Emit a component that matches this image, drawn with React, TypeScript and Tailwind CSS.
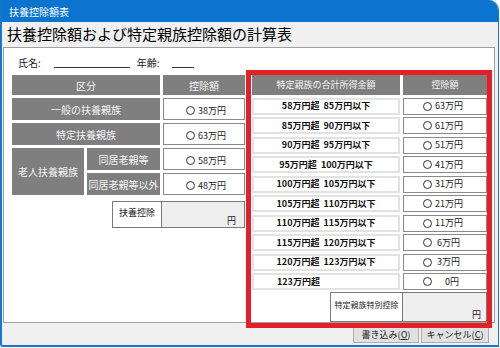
import React from "react";

const font = { fontFamily: '"Noto Sans CJK JP", "Noto Sans", sans-serif' };

function Circle() {
  return <span className="inline-block w-[9px] h-[9px] rounded-full border border-[#333] mr-[3px] shrink-0" />;
}

function Val({ v, className = "" }: { v: string; className?: string }) {
  return (
    <div className={"bg-white border border-[#8a8a8a] flex items-center text-[9px] text-[#222] " + className}>
      <Circle />
      <span>{v}</span>
    </div>
  );
}

const rightRows = [
  ["58万円超  85万円以下", "63万円"],
  ["85万円超  90万円以下", "61万円"],
  ["90万円超  95万円以下", "51万円"],
  ["95万円超  100万円以下", "41万円"],
  ["100万円超  105万円以下", "31万円"],
  ["105万円超  110万円以下", "21万円"],
  ["110万円超  115万円以下", "11万円"],
  ["115万円超  120万円以下", " 6万円"],
  ["120万円超  123万円以下", " 3万円"],
];

export default function App() {
  return (
    <div className="w-[500px] h-[348px] bg-white relative overflow-hidden" style={font}>
      <div className="w-[499px] h-[347px] flex flex-col bg-[#f0f0f0] border-l-2 border-b-2 border-r border-[#1877cc] rounded-tr-[10px] rounded-bl-[3px] overflow-hidden">
        <div className="h-[22px] bg-[#0b74cf] text-white text-[10px] pl-[7px] flex items-center shrink-0">扶養控除額表</div>
        <div className="h-[25px] flex items-center pl-[5px] text-[15px] text-black shrink-0">扶養控除額および特定親族控除額の計算表</div>
        <div className="h-[276px] mr-[3px] ml-[1px] bg-white border border-[#a0a0a0] shrink-0 pl-[8px] flex flex-col">
          <div className="h-[27px] flex items-center text-[10px] text-[#222] pt-[2px]">
            <span className="ml-[6px]">氏名:</span>
            <span className="ml-[13px] w-[76px] border-b border-[#333] mt-[10px]" />
            <span className="ml-[7px]">年齢:</span>
            <span className="ml-[12px] w-[22px] border-b border-[#333] mt-[10px]" />
          </div>
          <div className="flex gap-[7px]">
            <div className="w-[233px] flex flex-col">
              <div className="grid grid-cols-[72px_73px_82px] gap-[3px] text-[10px]">
                <div className="col-span-2 h-[20px] bg-[#7f7f7f] text-[#f4f4f4] flex items-center justify-center">区分</div>
                <div className="h-[20px] bg-[#7f7f7f] text-[#f4f4f4] flex items-center justify-center">控除額</div>
                <div className="col-span-2 h-[22px] bg-[#7f7f7f] text-[#f4f4f4] flex items-center justify-center">一般の扶養親族</div>
                <Val v="38万円" className="h-[22px] pl-[22px] pt-[3px]" />
                <div className="col-span-2 h-[22px] bg-[#7f7f7f] text-[#f4f4f4] flex items-center justify-center">特定扶養親族</div>
                <Val v="63万円" className="h-[22px] pl-[22px] pt-[3px]" />
                <div className="row-span-2 bg-[#7f7f7f] text-[#f4f4f4] flex items-center justify-center">老人扶養親族</div>
                <div className="h-[22px] bg-[#7f7f7f] text-[#f4f4f4] flex items-center justify-center">同居老親等</div>
                <Val v="58万円" className="h-[22px] pl-[22px] pt-[3px]" />
                <div className="h-[22px] bg-[#7f7f7f] text-[#f4f4f4] flex items-center justify-center">同居老親等以外</div>
                <Val v="48万円" className="h-[22px] pl-[22px] pt-[3px]" />
              </div>
              <div className="flex justify-end mt-[6px]">
                <div className="w-[50px] h-[27px] border border-[#7a7a7a] flex justify-center pt-[4px] text-[9px] text-[#222] bg-white">扶養控除</div>
                <div className="w-[83px] h-[27px] border border-l-0 border-[#7a7a7a] bg-[#efefef] flex items-end justify-end pr-[8px] text-[9px] text-[#222] leading-[12px]">円</div>
              </div>
            </div>
            <div className="w-[236px] flex flex-col">
              <div className="grid grid-cols-[148px_84px] gap-x-[3px] gap-y-[2.5px]">
                <div className="h-[20px] bg-[#7f7f7f] text-[#f4f4f4] text-[9px] flex items-center justify-center">特定親族の合計所得金額</div>
                <div className="h-[20px] bg-[#7f7f7f] text-[#f4f4f4] text-[9px] flex items-center justify-center">控除額</div>
                {rightRows.map(([a, b], i) => (
                  <React.Fragment key={i}>
                    <div className="h-[17px] bg-white border-2 border-[#e2e2e2] text-[9px] font-bold text-[#111] flex items-center justify-center whitespace-pre">{a}</div>
                    <div className="h-[17px] bg-white border border-[#8a8a8a] text-[9px] text-[#222] flex items-center pl-[19px] whitespace-pre">
                      <Circle />
                      <span>{b}</span>
                    </div>
                  </React.Fragment>
                ))}
                <div className="h-[17px] bg-white border-2 border-[#e2e2e2] text-[9px] font-bold text-[#111] flex items-center pl-[23px]">123万円超</div>
                <div className="h-[17px] bg-white border border-[#8a8a8a] text-[9px] text-[#222] flex items-center pl-[19px]">
                  <Circle />
                  <span className="ml-[10px]">0円</span>
                </div>
              </div>
              <div className="flex justify-end mt-[2px] mr-[1px]">
                <div className="w-[73px] h-[30px] border border-[#7a7a7a] bg-white flex justify-center pt-[6px] text-[8px] text-[#222]">特定親族特別控除</div>
                <div className="w-[84px] h-[30px] border border-l-0 border-[#7a7a7a] bg-[#efefef] flex items-end justify-end pr-[5px] text-[9px] text-[#222] leading-[12px]">円</div>
              </div>
            </div>
          </div>
        </div>
        <div className="flex justify-end gap-[2px] pr-[9px] pt-[3px] text-[9px] text-[#222]">
          <div className="w-[66px] h-[17px] bg-[#e1e1e1] border border-[#adadad] flex items-center justify-center">
            書き込み(<span className="underline">O</span>)
          </div>
          <div className="w-[68px] h-[17px] bg-[#e1e1e1] border border-[#adadad] flex items-center justify-center">
            キャンセル(<span className="underline">C</span>)
          </div>
        </div>
      </div>
      <div className="absolute left-[246px] top-[70px] w-[246px] h-[258px] border-[5px] border-[#e41f26]" />
    </div>
  );
}
